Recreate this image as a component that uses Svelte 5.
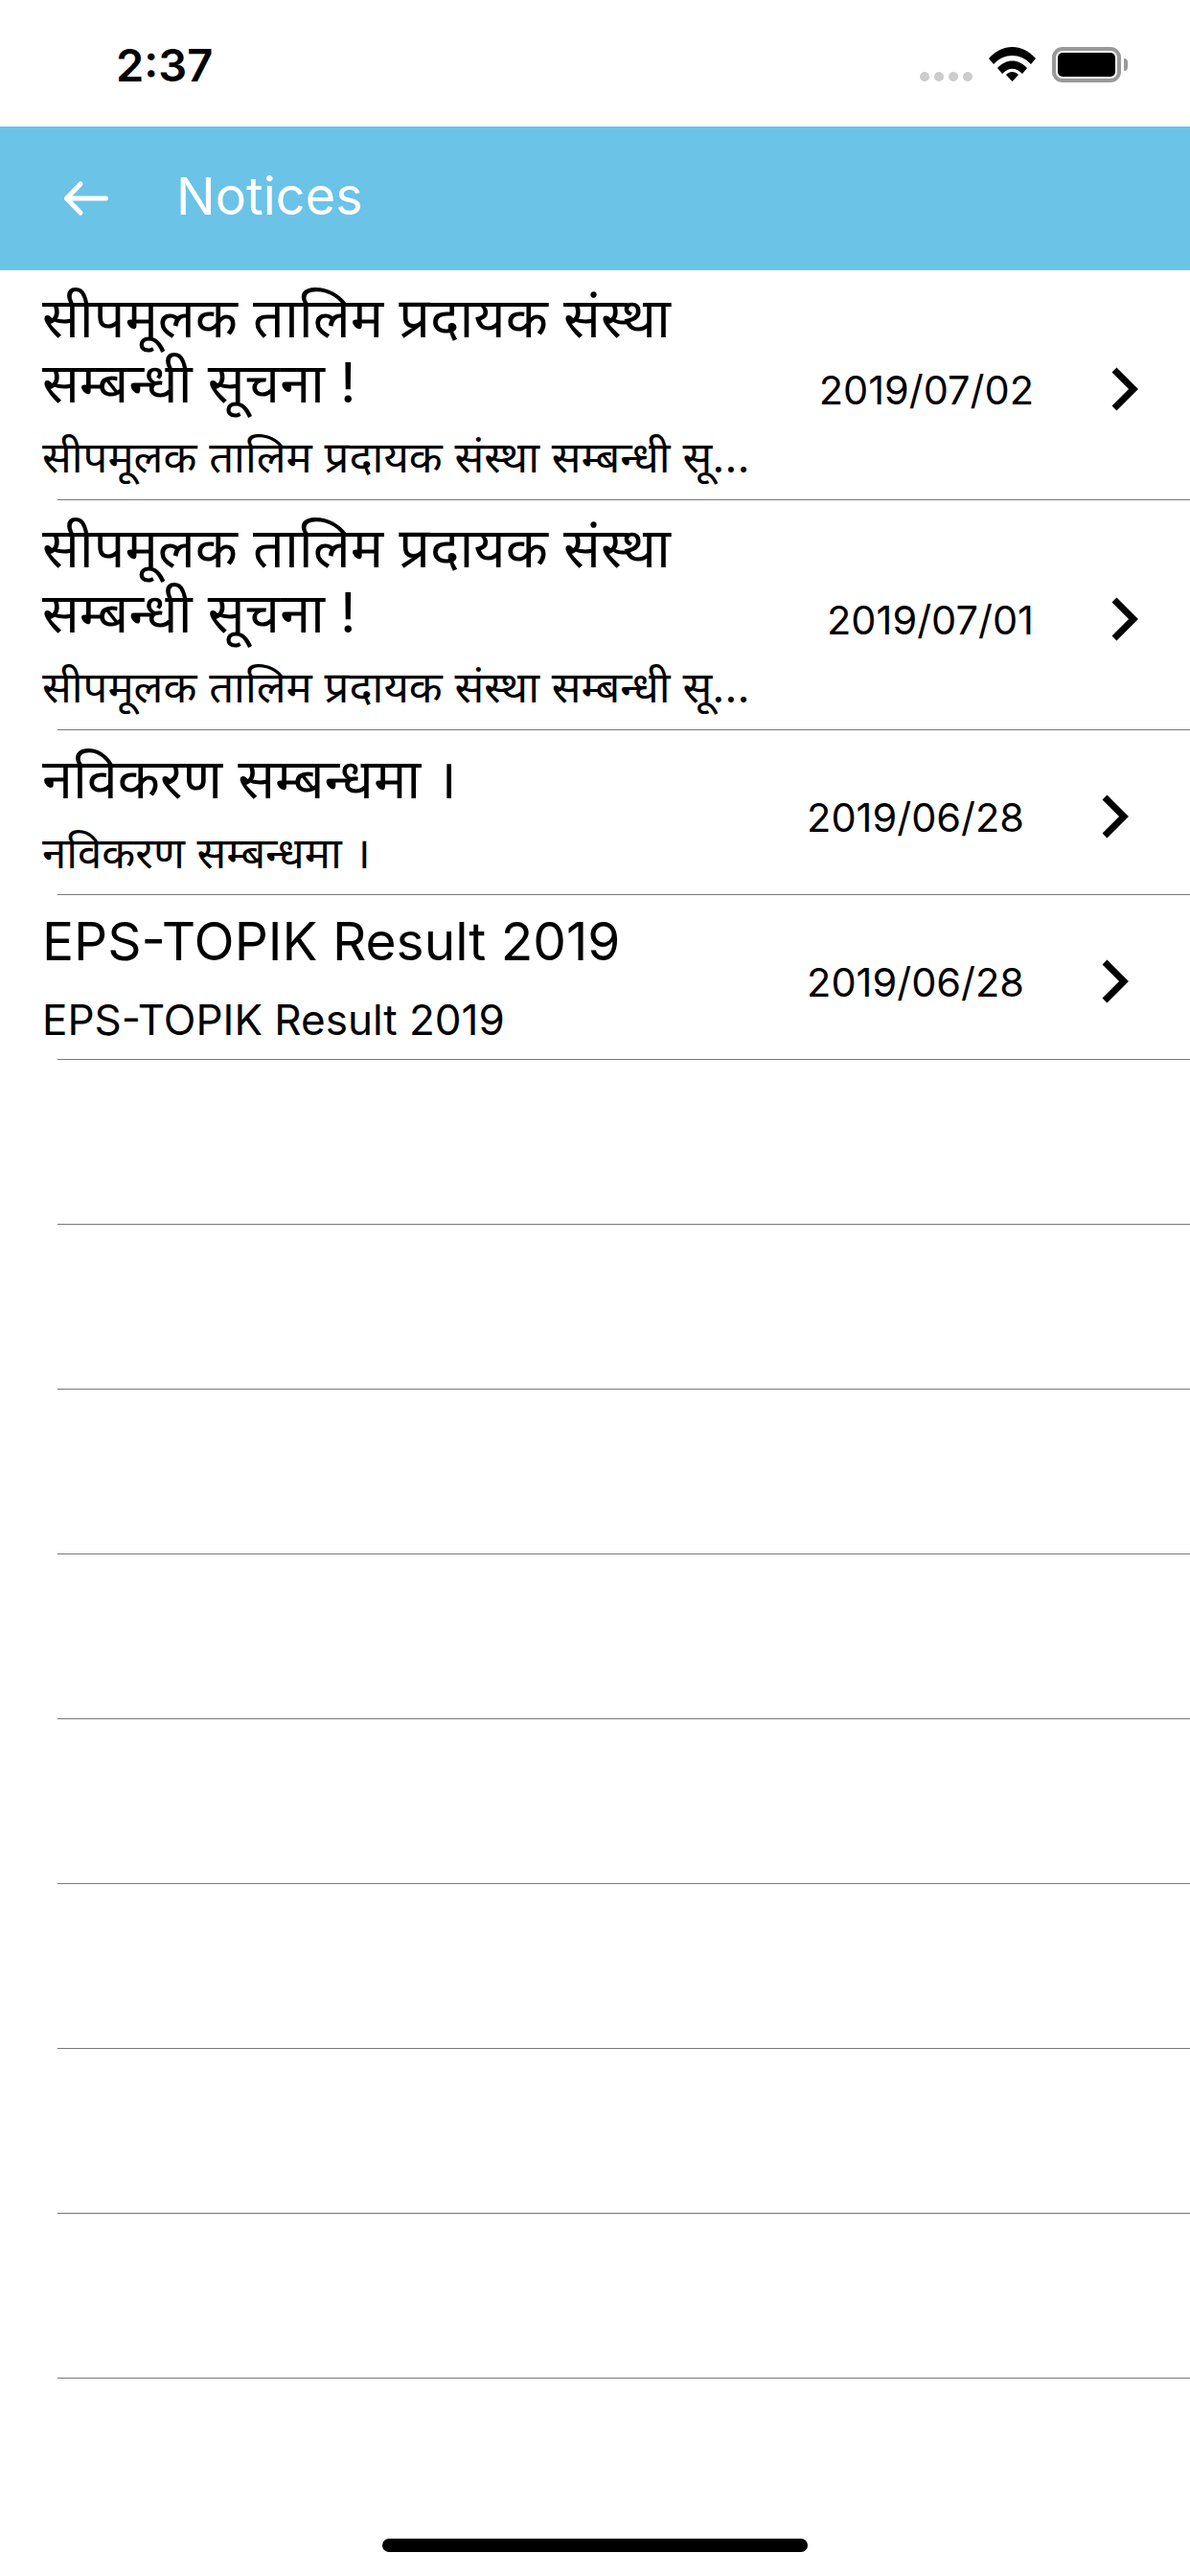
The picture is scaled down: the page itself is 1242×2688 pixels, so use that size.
<script>
	const sub = "सीपमूलक तालिम प्रदायक संस्था सम्बन्धी सूचना !";
	const notices = [
		{ title: sub, body: sub, date: "2019/07/02", tall: true, deva: true },
		{ title: sub, body: sub, date: "2019/07/01", tall: true, deva: true },
		{ title: "नविकरण सम्बन्धमा ।", body: "नविकरण सम्बन्धमा ।", date: "2019/06/28", deva: true },
		{ title: "EPS-TOPIK Result 2019", body: "EPS-TOPIK Result 2019", date: "2019/06/28" },
	];
	const blanks = Array(8).fill(0);
</script>

<div class="screen">
	<div class="status">
		<span class="time">2:37</span>
		<div class="status-icons">
			<div class="dots"><i></i><i></i><i></i><i></i></div>
			<svg class="wifi" viewBox="0 0 49 36">
				<path d="M0 12 C14 -4 35 -4 49 12 L44 18 C33 6 16 6 5 18 Z" />
				<path d="M9 22 C18 12 31 12 40 22 L35 28 C28 21 21 21 14 28 Z" />
				<path d="M18 29 C22 25 27 25 31 29 L24.5 36 Z" />
			</svg>
			<div class="battery"><div class="charge"></div></div>
			<div class="nub"></div>
		</div>
	</div>

	<header>
		<svg class="back" viewBox="0 0 50 40">
			<path d="M45.5 20 H4.5 M19 5 L4.5 20 L19 35" />
		</svg>
		<h1>Notices</h1>
	</header>

	<ul>
		{#each notices as n}
			<li class:tall={n.tall} class:deva={n.deva}>
				<div class="text">
					<div class="title">{n.title}</div>
					<div class="body">{n.body}</div>
				</div>
				<span class="date">{n.date}</span>
				<svg class="chev" viewBox="0 0 28 46">
					<path d="M3 3 L23 23 L3 43" />
				</svg>
			</li>
		{/each}
		{#each blanks as _}
			<li class="blank"></li>
		{/each}
	</ul>

	<div class="home"></div>
</div>

<style>
	:global(body) {
		margin: 0;
		background: #fff;
	}
	.screen {
		position: relative;
		width: 1242px;
		height: 2688px;
		overflow: hidden;
		background: #fff;
		font-family: Inter, "Noto Sans", "Noto Sans Devanagari", "Liberation Sans", sans-serif;
		color: #000;
	}
	.status {
		height: 132px;
		box-sizing: border-box;
		padding: 44px 65px 0 121px;
		display: flex;
		justify-content: space-between;
		align-items: flex-start;
	}
	.time {
		font-size: 47px;
		font-weight: 600;
		line-height: 48px;
	}
	.status-icons {
		display: flex;
		align-items: flex-start;
		padding-top: 5px;
	}
	.dots {
		display: flex;
		gap: 5px;
		margin: 26px 17px 0 0;
	}
	.dots i {
		width: 10px;
		height: 10px;
		border-radius: 50%;
		background: #ccc;
	}
	.wifi {
		width: 49px;
		height: 36px;
		margin-right: 17px;
		fill: #000;
	}
	.battery {
		width: 72px;
		height: 37px;
		box-sizing: border-box;
		border: 4px solid #999;
		border-radius: 11px;
		padding: 2px;
	}
	.charge {
		height: 100%;
		background: #000;
		border-radius: 5px;
	}
	.nub {
		width: 4px;
		height: 13px;
		margin: 12px 0 0 3px;
		background: #999;
		border-radius: 0 4px 4px 0;
	}
	header {
		height: 150px;
		box-sizing: border-box;
		background: #6bc3e7;
		display: flex;
		align-items: center;
		padding: 0 0 0 65px;
		color: #fff;
	}
	.back {
		width: 50px;
		height: 40px;
		fill: none;
		stroke: #fff;
		stroke-width: 5;
		stroke-linecap: round;
		stroke-linejoin: round;
		margin-right: 69px;
	}
	h1 {
		margin: 0 0 5px;
		font-size: 54px;
		font-weight: 400;
	}
	ul {
		list-style: none;
		margin: 0;
		padding: 0;
	}
	li {
		position: relative;
		height: 172px;
		display: flex;
		align-items: center;
		padding: 0 64px 0 44px;
	}
	li::after {
		content: "";
		position: absolute;
		left: 60px;
		right: 0;
		bottom: 0;
		height: 1px;
		background: #787878;
	}
	li.tall {
		height: 240px;
		padding-right: 54px;
	}
	.text {
		flex: 1;
		min-width: 0;
		padding-top: 2px;
	}
	.tall .text {
		padding-top: 0;
	}
	.title {
		width: 680px;
		font-size: 55px;
		line-height: 68px;
	}
	.deva .title {
		font-size: 57.5px;
	}
	.body {
		width: 740px;
		margin-top: 18px;
		font-size: 44px;
		line-height: 60px;
		white-space: nowrap;
		overflow: hidden;
		text-overflow: ellipsis;
	}
	.deva .body {
		margin-top: 14px;
		font-size: 45.5px;
	}
	.date {
		font-size: 41.5px;
		margin: 9px 81px 0 0;
	}
	.chev {
		width: 28px;
		height: 46px;
		margin-top: 8px;
		fill: none;
		stroke: #000;
		stroke-width: 7;
	}
	.home {
		position: absolute;
		left: 399px;
		top: 2649px;
		width: 444px;
		height: 14px;
		border-radius: 7px;
		background: #000;
	}
</style>
